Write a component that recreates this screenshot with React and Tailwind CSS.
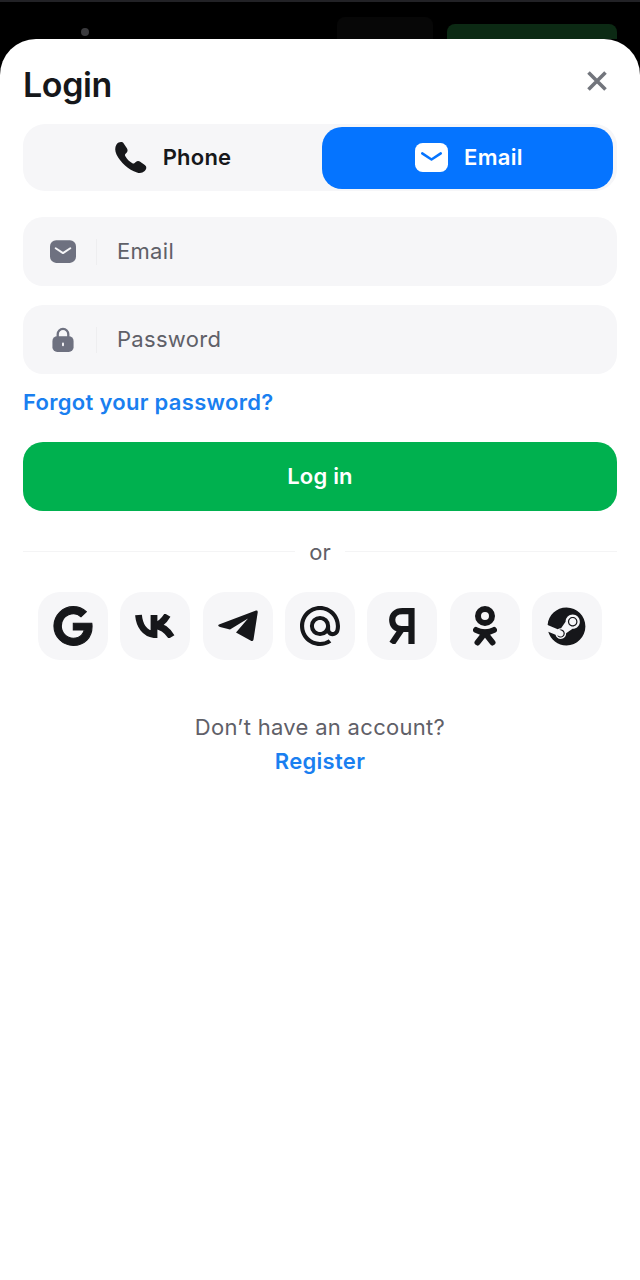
import React from 'react';
import { FaGoogle, FaSteam } from 'react-icons/fa';
import { SiMaildotru } from 'react-icons/si';

const PhoneIcon = ({ className }) => (
  <svg viewBox="0 0 34 34" className={className} fill="currentColor">
    <path d="M2.500 3.500C4.600 .7 8.300 .3 9.700 2.400l3.200 4.800c1 1.500.9 3.200-.3 4.500l-1.300 1.400c-.5.6-.5 1.200-.1 1.900 1.900 3.300 4 5.400 7.200 7.300.7.4 1.300.4 1.900-.1l1.500-1.300c1.300-1.100 3-1.200 4.400-.2l4.600 3.300c2.200 1.600 1.800 4.300-.1 6-2.200 2-5 2.500-7.700 1.400C14.500 29.300 6.500 21.300 2.500 13.500 .9 10.100.7 6 2.500 3.500z" />
  </svg>
);

const MailIcon = ({ className, stroke }) => (
  <svg viewBox="0 0 32 28" className={className}>
    <rect x="0" y="0" width="32" height="28" rx="7.500" fill="currentColor" />
    <path d="M7 10l9 6 9-6" fill="none" stroke={stroke} strokeWidth="2.400" strokeLinecap="round" strokeLinejoin="round" />
  </svg>
);

const LockIcon = ({ className }) => (
  <svg viewBox="0 0 22 26" className={className}>
    <path d="M5.500 11V7.500a5.500 5.500 0 0 1 11 0V11" fill="none" stroke="currentColor" strokeWidth="2.400" />
    <rect x="0" y="9.500" width="22" height="16.500" rx="5" fill="currentColor" />
    <rect x="10" y="16" width="2" height="4" rx="1" fill="#f6f6f8" />
  </svg>
);

const CloseIcon = ({ className }) => (
  <svg viewBox="0 0 20 20" className={className} fill="none" stroke="currentColor" strokeWidth="3.600">
    <path d="M1.500 1.500l17 17M18.500 1.500l-17 17" />
  </svg>
);

const VkIcon = ({ className }) => (
  <svg viewBox="0 0 40 24" className={className} fill="none" stroke="currentColor" strokeWidth="6.800">
    <path d="M3.500 1C4.500 12 10 19.500 19 20.500V1" />
    <path d="M19 11.500C25 11 29 7 32.500 1" />
    <path d="M19 11.500C26 12 32 15.500 36.500 23" />
  </svg>
);

const TelegramIcon = ({ className }) => (
  <svg viewBox="0 0 40 32" className={className} fill="currentColor">
    <path d="M1 14.500L38 .5Q40 0 39.700 2.500L35.500 29.500Q35 32 32.500 30.500L18 22.500 30 8.500 12 19.500 2 17Q-1 16 1 14.500Z" />
  </svg>
);

const YandexIcon = ({ className }) => (
  <svg viewBox="0 0 26 36" className={className} fill="none" stroke="currentColor" strokeWidth="6.200">
    <path d="M22.500 36V3.100H13.500C6.500 3.100 3.200 7 3.200 11.800 3.200 17.500 6.500 21 12.500 21H22.500" />
    <path d="M13.500 20L3 35.500" />
  </svg>
);

const OkIcon = ({ className }) => (
  <svg viewBox="0 0 24 40" className={className} fill="none" stroke="currentColor" strokeWidth="6" strokeLinecap="round">
    <circle cx="12" cy="10" r="7" />
    <path d="M3 24C8 27 16 27 21 24" />
    <path d="M12 27L4.500 36.500M12 27L19.500 36.500" />
  </svg>
);

const socials = [
  { name: 'google', icon: <FaGoogle className="w-[40px] h-[40px]" stroke="currentColor" strokeWidth="14" /> },
  { name: 'vk', icon: <VkIcon className="w-[40px] h-[24px]" /> },
  { name: 'telegram', icon: <TelegramIcon className="w-[40px] h-[32px]" /> },
  { name: 'mail', icon: <SiMaildotru className="w-[40px] h-[40px]" /> },
  { name: 'yandex', icon: <YandexIcon className="w-[26px] h-[36px]" /> },
  { name: 'ok', icon: <OkIcon className="w-[24px] h-[40px]" /> },
  { name: 'steam', icon: <FaSteam className="w-[39px] h-[39px]" /> },
];

const Field = ({ icon, label }) => (
  <div className="flex items-center h-[69px] rounded-[20px] bg-[#f6f6f8]">
    <div className="w-[74px] h-[26px] pl-[6px] flex items-center justify-center border-r border-[#eeeef0] text-[#6e7180]">
      {icon}
    </div>
    <span className="ml-[20px] text-[22px] tracking-[0.3px] text-[#5f6068]">{label}</span>
  </div>
);

const App = () => {
  return (
    <div className="w-[640px] h-[1280px] overflow-hidden bg-black font-['Inter',sans-serif]">
      {/* blurred page behind the sheet */}
      <div className="h-[2px] bg-[#222226]"></div>
      <div className="flex h-[37px]">
        <div className="ml-[81px] mt-[26px] w-[8px] h-[8px] rounded-full bg-[#3a3a3d]"></div>
        <div className="ml-[248px] mt-[15px] w-[96px] h-[22px] rounded-t-lg bg-[#070707]"></div>
        <div className="ml-[14px] mt-[22px] w-[170px] h-[15px] rounded-t-lg bg-[#0c2a14]"></div>
      </div>

      <div className="h-[1241px] bg-white rounded-t-[36px] px-[23px]">
        <div className="flex items-center justify-between h-[85px] pt-[5px]">
          <h1 className="text-[34px] font-semibold text-[#16171a] tracking-[-0.4px]">Login</h1>
          <CloseIcon className="w-[20px] h-[20px] mr-[10px] -mt-[7px] text-[#72757c]" />
        </div>

        <div className="flex items-center justify-between h-[67px] rounded-[22px] bg-[#f6f6f8] pr-[4px]">
          <div className="flex-1 flex items-center justify-center gap-[15px] text-[#17181b]">
            <PhoneIcon className="w-[34px] h-[34px]" />
            <span className="text-[22px] font-semibold tracking-[0.2px]">Phone</span>
          </div>
          <div className="w-[291px] h-[62px] pl-[3px] flex items-center justify-center gap-[16px] rounded-[20px] bg-[#0574ff] text-white">
            <MailIcon className="w-[33px] h-[29px]" stroke="#0574ff" />
            <span className="text-[22px] font-semibold tracking-[0.3px]">Email</span>
          </div>
        </div>

        <div className="flex flex-col gap-[19px] mt-[26px]">
          <Field icon={<MailIcon className="w-[26px] h-[23px]" stroke="#f6f6f8" />} label="Email" />
          <Field icon={<LockIcon className="w-[22px] h-[25px]" />} label="Password" />
        </div>

        <div className="mt-[14px] text-[22px] leading-[28px] font-semibold tracking-[0.3px] text-[#1a7ff0]">Forgot your password?</div>

        <button className="w-full h-[69px] mt-[26px] rounded-[20px] bg-[#00b14f] text-white text-[22px] font-semibold tracking-[0.2px]">
          Log in
        </button>

        <div className="flex items-center gap-[14px] mt-[27px] h-[28px]">
          <div className="flex-1 h-px mb-[2px] bg-[#f4f4f5]"></div>
          <span className="text-[22px] text-[#5f6068]">or</span>
          <div className="flex-1 h-px mb-[2px] bg-[#f4f4f5]"></div>
        </div>

        <div className="flex justify-between mx-[15px] mt-[26px]">
          {socials.map((s) => (
            <div key={s.name} className="w-[70px] h-[68px] rounded-[22px] bg-[#f6f6f8] flex items-center justify-center text-[#16171a]">
              {s.icon}
            </div>
          ))}
        </div>

        <div className="mt-[50px] text-center text-[22px] leading-[34px] tracking-[0.3px]">
          <div className="text-[#5f6068]">Don’t have an account?</div>
          <div className="font-semibold text-[#1a7ff0]">Register</div>
        </div>
      </div>
    </div>
  );
};

export default App;
